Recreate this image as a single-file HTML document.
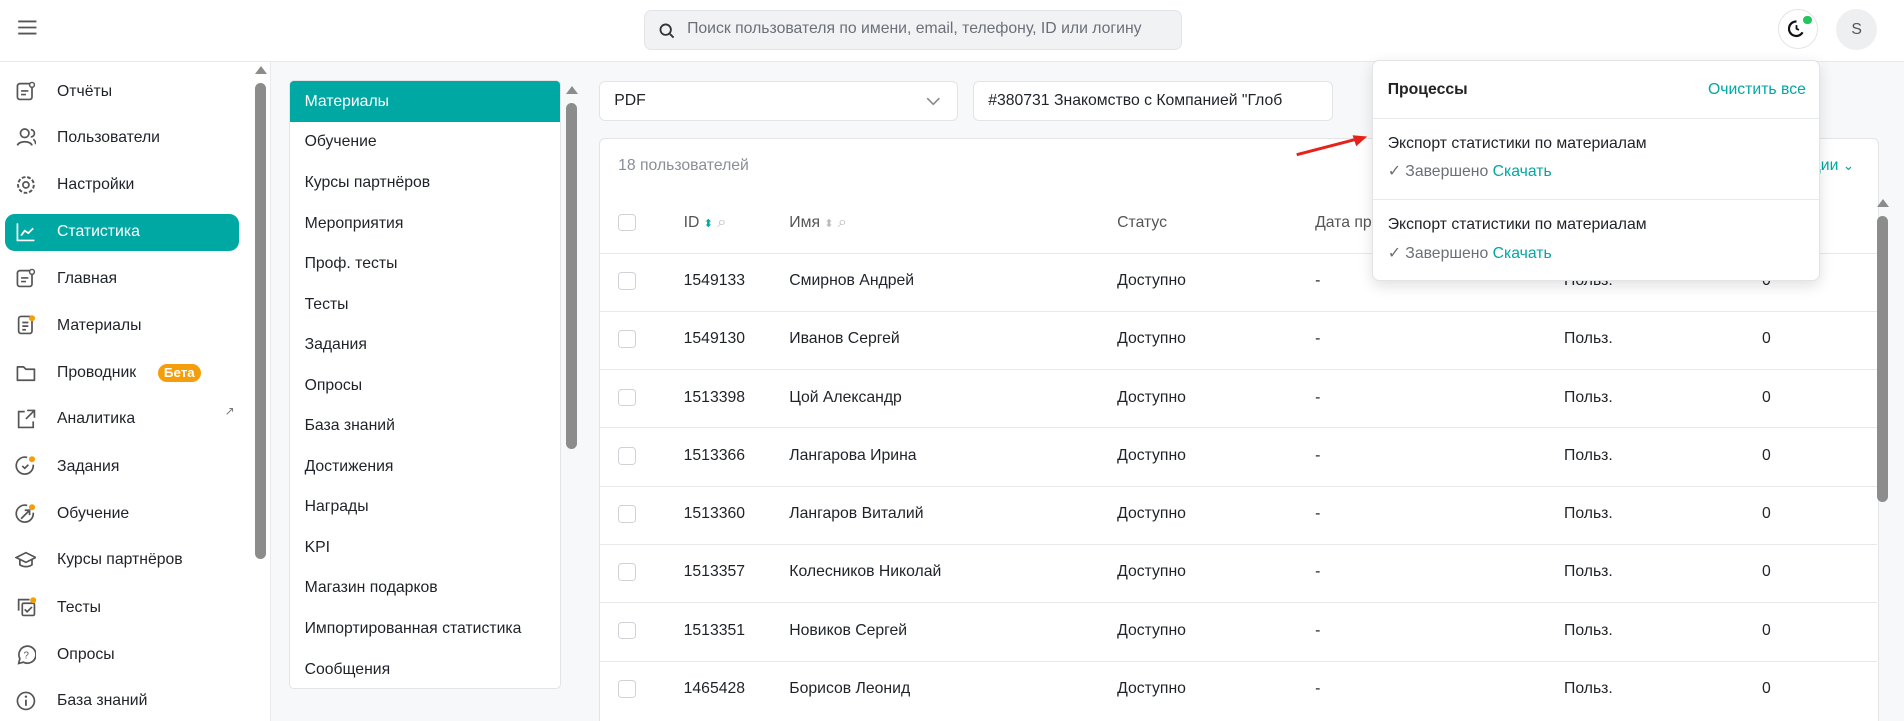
<!DOCTYPE html>
<html><head><meta charset="utf-8"><style>
html{zoom:1.2143;overflow:hidden}
body{margin:0;width:1568px;height:594px;overflow:hidden;font-family:"Liberation Sans",sans-serif;font-size:13px;color:#1f2329;background:#fff;position:relative}
.a{position:absolute}
.hdr{left:0;top:0;width:1568px;height:50px;border-bottom:1px solid #e8e9ec;background:#fff}
.search{left:530px;top:8px;width:443px;height:33px;background:#f1f2f4;border:1px solid #e3e4e7;border-radius:6px;box-sizing:border-box}
.search span{position:absolute;left:35px;top:8px;color:#6b7078}
.side .it{position:absolute;left:4px;width:193px;height:31px;border-radius:8px}
.side .it span{position:absolute;left:43px;top:8px}
.side svg{position:absolute;left:8px;top:6px}
.content{left:222px;top:51px;width:1346px;height:543px;background:#f7f8fa;border-left:1px solid #e8e9ec}
.sb{background:#8c8c8c;border-radius:5px;width:9px}
.tri{width:0;height:0;border-left:5px solid transparent;border-right:5px solid transparent;border-bottom:7px solid #8c8c8c}
.cat{left:238px;top:66px;width:224px;height:501px;background:#fff;border:1px solid #e3e4e7;border-radius:4px;box-sizing:border-box;overflow:hidden}
.cat div{height:33.4px;line-height:33.4px;padding-left:12px}
.inp{background:#fff;border:1px solid #e3e4e7;border-radius:5px;box-sizing:border-box;height:33px;line-height:31px;padding-left:12px}
.card{left:493px;top:114px;width:1054px;height:480px;background:#fff;border:1px solid #e3e4e7;border-bottom:none;border-radius:5px 5px 0 0;box-sizing:border-box}
.row{position:absolute;left:494px;width:1052px;height:48px;border-bottom:1px solid #e8e9ec}
.row span{position:absolute;top:16px}
.cb{position:absolute;left:15px;top:16px;width:13px;height:13px;border:1px solid #cfd2d6;border-radius:3px}
.pop{left:1130px;top:49px;width:369px;height:182px;background:#fff;border:1px solid #e3e4e7;border-radius:6px;box-shadow:0 4px 12px rgba(0,0,0,.12);box-sizing:border-box}
.teal{color:#00a8a3}
</style></head><body>
<div class="a hdr"></div>
<svg class="a" style="left:14px;top:16px" width="17" height="14"><path d="M1 2h15M1 7h15M1 12h15" stroke="#555" stroke-width="1.5"/></svg>
<div class="a search"><svg style="position:absolute;left:12px;top:10px" width="13" height="13"><circle cx="5.5" cy="5.5" r="4.3" fill="none" stroke="#333" stroke-width="1.5"/><path d="M9 9l3 3" stroke="#333" stroke-width="1.5"/></svg><span>Поиск пользователя по имени, email, телефону, ID или логину</span></div>
<div class="a" style="left:1464px;top:7px;width:33px;height:33px;border:1px solid #e3e4e7;border-radius:50%;box-sizing:border-box"><svg style="position:absolute;left:8px;top:8px" width="16" height="16"><path d="M12 11A6 6 0 1 1 7 2" fill="none" stroke="#111" stroke-width="1.8"/><path d="M7 5v3l2 1" stroke="#111" stroke-width="1.5" fill="none"/></svg><div style="position:absolute;left:20px;top:5px;width:7px;height:7px;background:#22c55e;border-radius:50%"></div></div>
<div class="a" style="left:1512px;top:7px;width:34px;height:34px;border-radius:50%;background:#eeeff1;text-align:center;line-height:34px;color:#555">S</div>

<div class="side">
<div class="it" style="top:60px"><svg width="18" height="18"><rect x="2" y="3" width="12" height="13" rx="2" fill="none" stroke="#555" stroke-width="1.4"/><path d="M5 9h6M5 12h4" stroke="#555" stroke-width="1.4"/><circle cx="14" cy="4" r="2" fill="#fff" stroke="#555" stroke-width="1.2"/></svg><span>Отчёты</span></div>
<div class="it" style="top:98px"><svg width="18" height="18"><circle cx="8" cy="6" r="3.5" fill="none" stroke="#555" stroke-width="1.4"/><path d="M2 16c1-4 11-4 12 0M13 3a3 3 0 0 1 0 6M15 11c2 1 2 3 2 4" fill="none" stroke="#555" stroke-width="1.4"/></svg><span>Пользователи</span></div>
<div class="it" style="top:137px"><svg width="18" height="18"><circle cx="9" cy="9" r="6.5" fill="none" stroke="#555" stroke-width="1.6" stroke-dasharray="3 1.5"/><circle cx="9" cy="9" r="2.5" fill="none" stroke="#555" stroke-width="1.4"/></svg><span>Настройки</span></div>
<div class="it" style="top:176px;background:#00a8a3;color:#fff"><svg width="18" height="18"><path d="M2 2v14h14" fill="none" stroke="#fff" stroke-width="1.4"/><path d="M5 12l3-4 3 2 4-4" fill="none" stroke="#fff" stroke-width="1.4"/></svg><span>Статистика</span></div>
<div class="it" style="top:214px"><svg width="18" height="18"><rect x="2" y="3" width="12" height="13" rx="2" fill="none" stroke="#555" stroke-width="1.4"/><path d="M5 9h6M5 12h4" stroke="#555" stroke-width="1.4"/><circle cx="14" cy="4" r="2" fill="#fff" stroke="#555" stroke-width="1.2"/></svg><span>Главная</span></div>
<div class="it" style="top:253px"><svg width="18" height="18"><rect x="3" y="2" width="11" height="14" rx="2" fill="none" stroke="#555" stroke-width="1.4"/><path d="M6 7h5M6 10h5M6 13h3" stroke="#555" stroke-width="1.4"/><circle cx="14" cy="3.5" r="2.5" fill="#f59e0b"/></svg><span>Материалы</span></div>
<div class="it" style="top:292px"><svg width="18" height="18"><path d="M2 4h5l2 2h7v9H2z" fill="none" stroke="#555" stroke-width="1.4" stroke-linejoin="round"/></svg><span>Проводник</span><div style="position:absolute;left:126px;top:8px;background:#f59e0b;color:#fff;font-size:11px;font-weight:bold;border-radius:8px;padding:1px 5px">Бета</div></div>
<div class="it" style="top:330px"><svg width="18" height="18"><path d="M8 3H3v13h12v-5M10 2h6v6M16 2l-7 7" fill="none" stroke="#555" stroke-width="1.4"/></svg><span>Аналитика</span><span style="left:181px;top:3px;font-size:10px;color:#777">↗</span></div>
<div class="it" style="top:369px"><svg width="18" height="18"><path d="M15 8a7 7 0 1 1-5-6" fill="none" stroke="#555" stroke-width="1.4"/><path d="M6 9l2 2 3-3" fill="none" stroke="#555" stroke-width="1.4"/><circle cx="14" cy="3.5" r="2.5" fill="#f59e0b"/></svg><span>Задания</span></div>
<div class="it" style="top:408px"><svg width="18" height="18"><path d="M15 8a7 7 0 1 1-5-6" fill="none" stroke="#555" stroke-width="1.4"/><path d="M5 13l7-7M8 6h4v4" fill="none" stroke="#555" stroke-width="1.4"/><circle cx="14" cy="3.5" r="2.5" fill="#f59e0b"/></svg><span>Обучение</span></div>
<div class="it" style="top:446px"><svg width="18" height="18"><path d="M1 7l8-4 8 4-8 4zM4 9v4c3 2 7 2 10 0V9" fill="none" stroke="#555" stroke-width="1.4"/></svg><span>Курсы партнёров</span></div>
<div class="it" style="top:485px"><svg width="18" height="18"><path d="M3 12V3h9" fill="none" stroke="#555" stroke-width="1.4"/><rect x="6" y="6" width="10" height="10" rx="1" fill="none" stroke="#555" stroke-width="1.4"/><path d="M8 11l2 2 4-4" fill="none" stroke="#555" stroke-width="1.4"/><circle cx="15" cy="3.5" r="2.5" fill="#f59e0b"/></svg><span>Тесты</span></div>
<div class="it" style="top:524px"><svg width="18" height="18"><path d="M3 16l1-4a7 7 0 1 1 3 3z" fill="none" stroke="#555" stroke-width="1.4"/><text x="7" y="12" font-size="8" fill="#555" font-family="Liberation Sans">?</text></svg><span>Опросы</span></div>
<div class="it" style="top:562px"><svg width="18" height="18"><circle cx="9" cy="9" r="7" fill="none" stroke="#555" stroke-width="1.4"/><path d="M9 8v5" stroke="#555" stroke-width="1.5"/><circle cx="9" cy="5.5" r="1" fill="#555"/></svg><span>База знаний</span></div>
</div>

<div class="a tri" style="left:210px;top:54px"></div>
<div class="a sb" style="left:210px;top:68px;height:392px"></div>
<div class="a content"></div>

<div class="a cat">
<div style="background:#00a8a3;color:#fff;height:34px;line-height:34px">Материалы</div>
<div>Обучение</div><div>Курсы партнёров</div><div>Мероприятия</div><div>Проф. тесты</div><div>Тесты</div><div>Задания</div><div>Опросы</div><div>База знаний</div><div>Достижения</div><div>Награды</div><div>KPI</div><div>Магазин подарков</div><div>Импортированная статистика</div><div>Сообщения</div>
</div>
<div class="a tri" style="left:466px;top:71px"></div>
<div class="a sb" style="left:466px;top:85px;height:285px"></div>

<div class="a inp" style="left:493px;top:67px;width:296px">PDF<svg style="position:absolute;right:14px;top:12px" width="12" height="8"><path d="M1 1l5 5 5-5" fill="none" stroke="#888" stroke-width="1.3"/></svg></div>
<div class="a inp" style="left:801px;top:67px;width:297px">#380731 Знакомство с Компанией "Глоб</div>

<div class="a card"></div>
<div class="a" style="left:509px;top:129px;color:#8a8f96">18 пользователей</div>
<div class="a teal" style="left:1492px;top:129px">ции <span style="font-size:11px">⌄</span></div>

<div class="row" style="top:160px"><div class="cb"></div><span style="left:69px;color:#555">ID <span style="position:static;color:#00a8a3;font-size:9px">⬍</span> <span style="position:static;color:#bbb">⌕</span></span><span style="left:156px;color:#555">Имя <span style="position:static;color:#bbb;font-size:9px">⬍</span> <span style="position:static;color:#bbb">⌕</span></span><span style="left:426px;color:#555">Статус</span><span style="left:589px;color:#555">Дата пр</span></div>

<div class="row" style="top:208px"><div class="cb"></div><span style="left:69px">1549133</span><span style="left:156px">Смирнов Андрей</span><span style="left:426px">Доступно</span><span style="left:589px">-</span><span style="left:794px">Польз.</span><span style="left:957px">0</span></div>
<div class="row" style="top:256px"><div class="cb"></div><span style="left:69px">1549130</span><span style="left:156px">Иванов Сергей</span><span style="left:426px">Доступно</span><span style="left:589px">-</span><span style="left:794px">Польз.</span><span style="left:957px">0</span></div>
<div class="row" style="top:304px"><div class="cb"></div><span style="left:69px">1513398</span><span style="left:156px">Цой Александр</span><span style="left:426px">Доступно</span><span style="left:589px">-</span><span style="left:794px">Польз.</span><span style="left:957px">0</span></div>
<div class="row" style="top:352px"><div class="cb"></div><span style="left:69px">1513366</span><span style="left:156px">Лангарова Ирина</span><span style="left:426px">Доступно</span><span style="left:589px">-</span><span style="left:794px">Польз.</span><span style="left:957px">0</span></div>
<div class="row" style="top:400px"><div class="cb"></div><span style="left:69px">1513360</span><span style="left:156px">Лангаров Виталий</span><span style="left:426px">Доступно</span><span style="left:589px">-</span><span style="left:794px">Польз.</span><span style="left:957px">0</span></div>
<div class="row" style="top:448px"><div class="cb"></div><span style="left:69px">1513357</span><span style="left:156px">Колесников Николай</span><span style="left:426px">Доступно</span><span style="left:589px">-</span><span style="left:794px">Польз.</span><span style="left:957px">0</span></div>
<div class="row" style="top:496px"><div class="cb"></div><span style="left:69px">1513351</span><span style="left:156px">Новиков Сергей</span><span style="left:426px">Доступно</span><span style="left:589px">-</span><span style="left:794px">Польз.</span><span style="left:957px">0</span></div>
<div class="row" style="top:544px;border:none;height:50px"><div class="cb"></div><span style="left:69px">1465428</span><span style="left:156px">Борисов Леонид</span><span style="left:426px">Доступно</span><span style="left:589px">-</span><span style="left:794px">Польз.</span><span style="left:957px">0</span></div>

<div class="a tri" style="left:1546px;top:164px"></div>
<div class="a sb" style="left:1546px;top:178px;height:235px"></div>

<svg class="a" style="left:1060px;top:105px" width="70" height="28"><path d="M8 22L58 9" stroke="#e5231b" stroke-width="2.5"/><path d="M66 7l-12 -1 3 9z" fill="#e5231b"/></svg>

<div class="a pop">
<div style="position:absolute;left:12px;top:17px;font-weight:bold;color:#222">Процессы</div>
<div class="teal" style="position:absolute;right:11px;top:17px">Очистить все</div>
<div style="position:absolute;left:0;top:47px;width:100%;border-top:1px solid #e8e9ec"></div>
<div style="position:absolute;left:12px;top:61px">Экспорт статистики по материалам</div>
<div style="position:absolute;left:12px;top:83px;color:#6b7078">✓ Завершено <span class="teal">Скачать</span></div>
<div style="position:absolute;left:0;top:114px;width:100%;border-top:1px solid #e8e9ec"></div>
<div style="position:absolute;left:12px;top:128px">Экспорт статистики по материалам</div>
<div style="position:absolute;left:12px;top:150px;color:#6b7078">✓ Завершено <span class="teal">Скачать</span></div>
</div>
</body></html>
